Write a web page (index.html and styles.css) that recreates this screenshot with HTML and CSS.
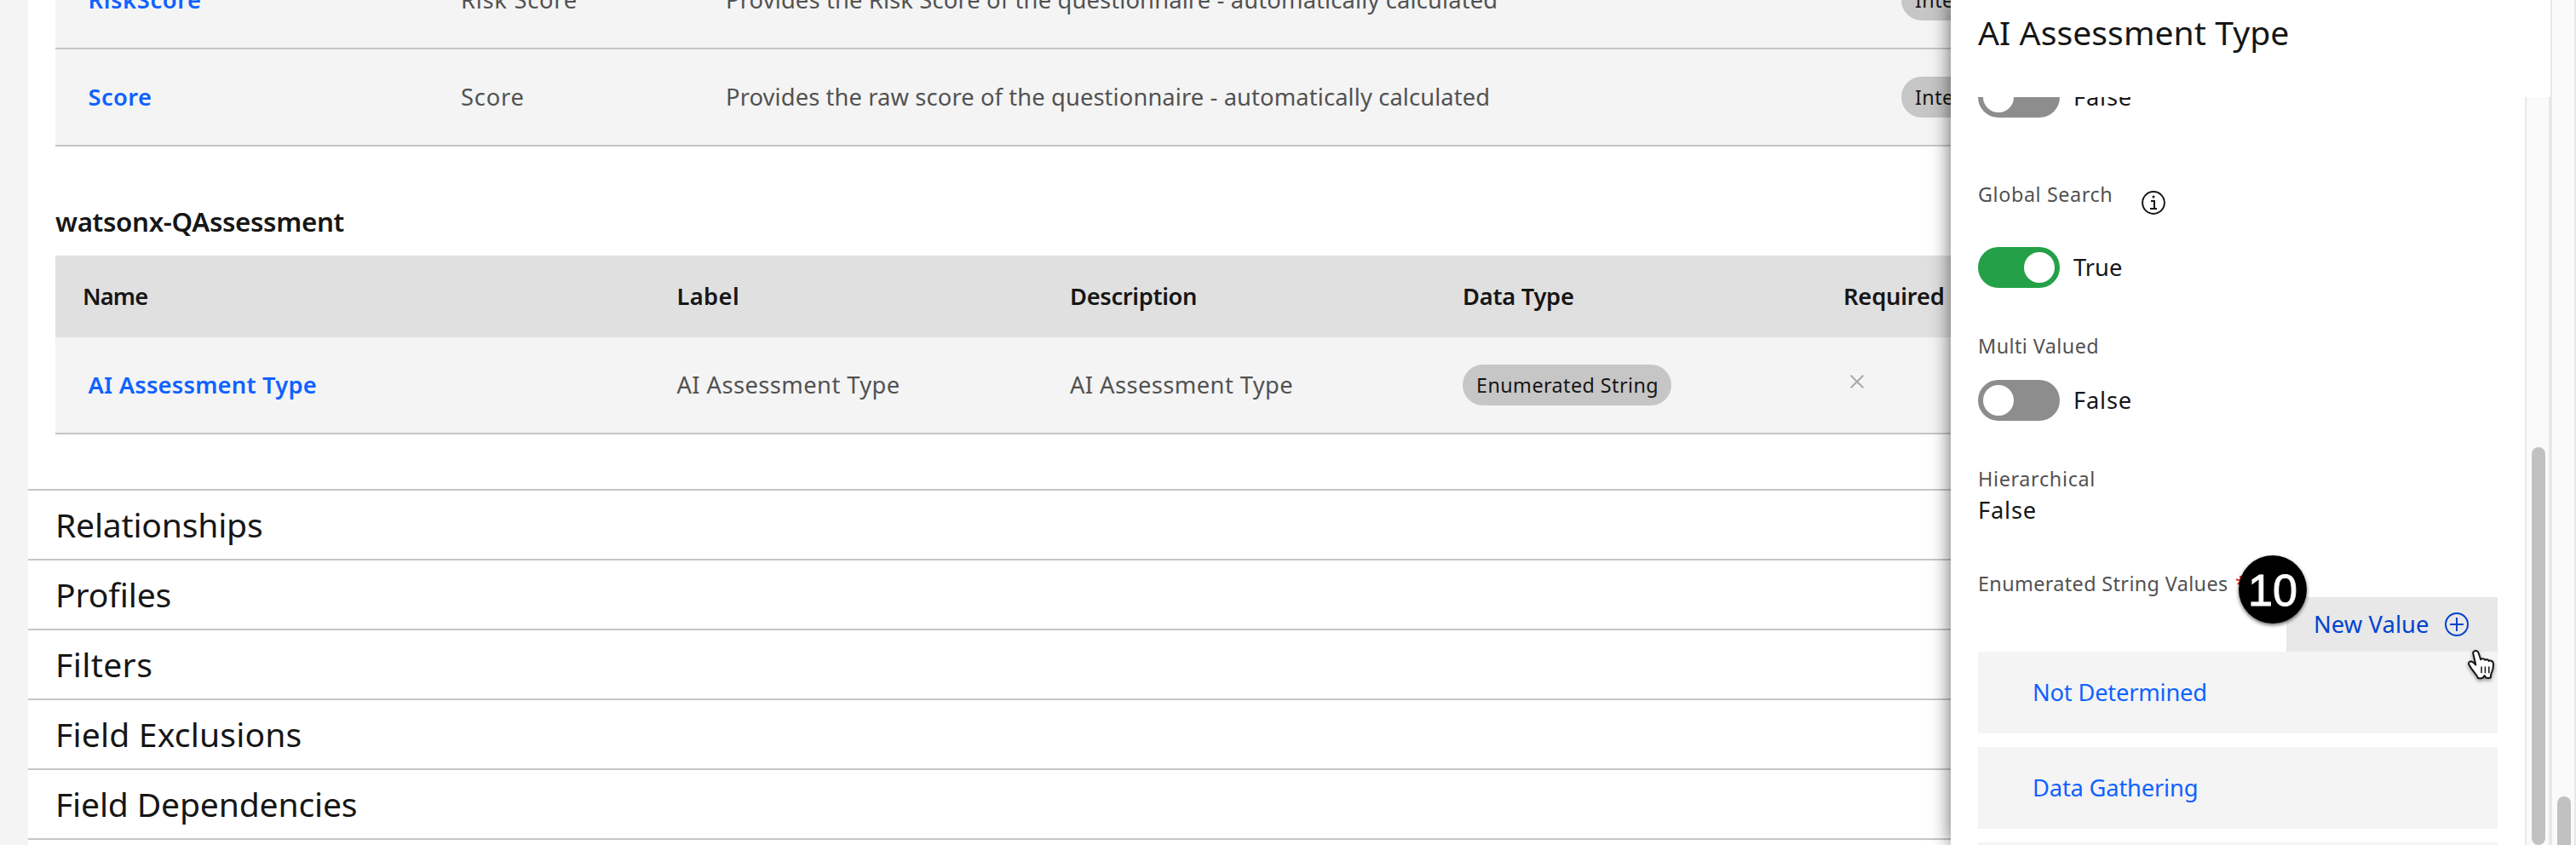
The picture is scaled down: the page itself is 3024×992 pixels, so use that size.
FILE: index.html
```
<!DOCTYPE html>
<html lang="en">
<head>
<meta charset="utf-8">
<title>AI Assessment Type</title>
<link rel="stylesheet" href="styles.css">
</head>
<body>
<div class="app">
  <main class="page">
    <section class="table table-scores">
      <div class="row">
        <a class="link ls-risk-b">RiskScore</a>
        <span class="ls-risk">Risk Score</span>
        <span class="ls-desc1">Provides the Risk Score of the questionnaire - automatically calculated</span>
        <span class="tag ls-int">Integer</span>
      </div>
      <div class="row">
        <a class="link ls-score-b">Score</a>
        <span class="ls-score">Score</span>
        <span class="ls-desc2">Provides the raw score of the questionnaire - automatically calculated</span>
        <span class="tag ls-int">Integer</span>
      </div>
    </section>

    <h2 class="group-title">watsonx-QAssessment</h2>
    <section class="table table-fields">
      <div class="head">
        <span class="ls-name">Name</span>
        <span class="ls-label">Label</span>
        <span class="ls-description">Description</span>
        <span class="ls-datatype">Data Type</span>
        <span class="ls-required">Required</span>
      </div>
      <div class="row">
        <a class="link ls-ai-b">AI Assessment Type</a>
        <span class="ls-ai">AI Assessment Type</span>
        <span class="ls-ai">AI Assessment Type</span>
        <span class="tag ls-enum">Enumerated String</span>
        <svg class="cross" viewBox="0 0 16 16"><path d="M.7.7l14.6 14.6M15.3.7L.7 15.3"/></svg>
      </div>
    </section>

    <section class="accordion">
      <h3 class="ls-rel">Relationships</h3>
      <h3 class="ls-pro">Profiles</h3>
      <h3 class="ls-fil">Filters</h3>
      <h3 class="ls-exc">Field Exclusions</h3>
      <h3 class="ls-dep">Field Dependencies</h3>
      <h3></h3>
    </section>
  </main>

  <aside class="panel">
    <h1 class="panel-title">AI Assessment Type</h1>
    <div class="panel-body">
      <div class="fields">
        <div class="toggle-row first">
          <span class="toggle"><i class="knob"></i></span><span class="ls-false">False</span>
        </div>

        <div class="label-row global">
          <span class="label ls-global">Global Search</span>
          <svg class="info" viewBox="0 0 28 28">
            <circle cx="14" cy="14" r="12.9" fill="none" stroke="#161616" stroke-width="2"/>
            <circle cx="14" cy="6.9" r="1.5" fill="#161616"/>
            <path d="M11 12h4v8M10 20.9h8" fill="none" stroke="#161616" stroke-width="2"/>
          </svg>
        </div>
        <div class="toggle-row">
          <span class="toggle on"><i class="knob"></i></span><span class="ls-true">True</span>
        </div>

        <div class="label multi ls-multi">Multi Valued</div>
        <div class="toggle-row">
          <span class="toggle"><i class="knob"></i></span><span class="ls-false">False</span>
        </div>

        <div class="label hier ls-hier">Hierarchical</div>
        <div class="value ls-false">False</div>

        <div class="label enum ls-values">Enumerated String Values <span class="required">*</span></div>
        <div class="actions">
          <button class="new-value">
            <span class="ls-new">New Value</span>
            <svg class="plus" viewBox="0 0 28 28"><circle cx="14" cy="14" r="13"/><path d="M14 6v16M6 14h16"/></svg>
          </button>
        </div>
        <div class="values">
          <a class="item ls-not">Not Determined</a>
          <a class="item ls-data">Data Gathering</a>
          <a class="item"></a>
        </div>
      </div>
      <div class="scroll inner"><i class="thumb"></i></div>
    </div>
  </aside>
  <div class="scroll outer"><i class="thumb"></i></div>

  <div class="badge">10</div>
  <svg class="cursor" viewBox="0 0 34 38">
    <path d="M9.2 2.2c1.900-.8 3.800.3 4.400 2.300l2.500 7.700c1.600-1.300 3.900-1.100 5 .6 1.600-1 3.700-.6 4.700 1.100 2.200-1 4.900.3 5.100 2.900.4 5.200-.4 8.200-2.600 12.300l-.5 4.400c-1.900.5-3.700.5-5.600.1l-1.600-2.500-2.300 2.800c-1.800.4-3.600.4-5.400 0-.6-2.300-2.400-4.100-4.500-6.700-2.300-2.900-4.300-5.900-6-9-1.100-2.100.5-3.900 2.700-3.600 2.100.3 3.500 2 5.200 3.900L7.300 5.600c-.5-1.500.4-2.900 1.900-3.400z" fill="#fff" stroke="#161616" stroke-width="2" stroke-linejoin="round"/>
    <path d="M17 20.500v7.700M21.400 20.500v7.700M25.800 20.500v7.700" fill="none" stroke="#161616" stroke-width="1.500"/>
  </svg>
</div>
</body>
</html>
```
FILE: styles.css
```
* { box-sizing: border-box; }
body { margin: 0; }

.app {
  position: relative;
  width: 3024px;
  height: 992px;
  overflow: hidden;
  padding-left: 33px;
  background: #f4f4f4;
  color: #161616;
  font: 27.3px/36px "Noto Sans", sans-serif;
}
.page { height: 992px; overflow: hidden; background: #fff; }

/* Tables */
.table { margin-left: 32px; }
.table-scores { margin-top: -56px; }
.row, .head { display: grid; align-items: center; white-space: nowrap; }
.table-scores .row { grid-template-columns: 476px 311px 1380px auto; }
.table-fields .row, .table-fields .head { grid-template-columns: 729.5px 461.5px 461px 447px auto; }
.row {
  height: 114px;
  padding-bottom: 1px;
  background: #f4f4f4;
  border-bottom: 2px solid #c6c6c6;
  color: #525252;
}
.head { height: 96px; padding-bottom: 1px; background: #e0e0e0; font-weight: 600; }
.head span:first-child { padding-left: 32px; }
.link { padding-left: 38.5px; color: #0f62fe; font-weight: 600; }
.tag {
  justify-self: start;
  height: 48px;
  margin-top: 1px;
  padding: 0 15px 0 16px;
  border-radius: 24px;
  background: #c6c6c6;
  color: #161616;
  font-size: 23.4px;
  line-height: 49px;
}
.cross { width: 16px; height: 16px; margin: -7px 0 0 8px; fill: none; stroke: #a8a8a8; stroke-width: 2; }
.group-title { margin: 0; padding: 64px 0 16px 32px; font-size: 31.3px; font-weight: 600; line-height: 48px; letter-spacing: -.34px; }

/* Accordion */
.accordion { margin-top: 64px; }
.accordion h3 {
  height: 82px;
  margin: 0;
  padding-left: 32px;
  border-top: 2px solid #c6c6c6;
  font-size: 39.1px;
  font-weight: 400;
  line-height: 80px;
}

/* Side panel */
.panel {
  position: absolute;
  top: 0;
  left: 2290px;
  width: 704px;
  height: 992px;
  display: flex;
  flex-direction: column;
  background: #fff;
  box-shadow: 0 0 22px rgba(0, 0, 0, .6);
}
.panel-title { height: 114px; margin: 0; padding: 8px 0 0 32px; font-size: 39.1px; font-weight: 400; line-height: 60px; letter-spacing: .07px; }
.panel-body { display: flex; height: 878px; overflow: hidden; }
.fields { width: 674px; padding: 0 32px; }
.toggle-row { display: flex; gap: 16px; height: 48px; line-height: 47px; }
.toggle-row.first { margin-top: -24px; }
.toggle { display: flex; width: 96px; height: 48px; padding: 6px; border-radius: 24px; background: #8d8d8d; }
.toggle.on { justify-content: flex-end; background: #24a148; }
.knob { width: 36px; height: 36px; border-radius: 50%; background: #fff; }
.label { height: 32px; color: #525252; font-size: 23.4px; line-height: 32px; white-space: nowrap; }
.label-row { display: flex; align-items: flex-start; height: 32px; }
.global { margin: 74px 0 46px; }
.label-row .label { width: 192px; }
.info { width: 28px; height: 28px; margin-top: 12px; }
.multi { margin: 52px 0 24px; }
.hier { margin: 52px 0 3px; }
.enum { margin-top: 52px; }
.required { padding-left: 2px; color: #da1e28; }
.actions { display: flex; justify-content: flex-end; }
.new-value {
  display: flex;
  align-items: center;
  justify-content: space-between;
  width: 248px;
  height: 64px;
  padding: 0 34px 0 32px;
  border: 0;
  background: #e8e8e8;
  color: #0043ce;
  font: inherit;
  line-height: 64px;
}
.plus { width: 28px; height: 28px; fill: none; stroke: #0043ce; stroke-width: 2; }
.values { display: flex; flex-direction: column; gap: 16px; }
.item { height: 96px; padding-left: 64px; background: #f4f4f4; color: #0f62fe; line-height: 96px; }

/* Scrollbars */
.scroll { width: 30px; padding-left: 6px; background: #fafafa; border: 2px solid #e8e8e8; border-width: 0 2px; overflow: hidden; }
.inner { padding-top: 411px; height: 878px; }
.outer { position: absolute; top: 0; right: 0; height: 992px; padding-top: 935px; }
.thumb { display: block; width: 16px; height: 467px; border-radius: 8px; background: #c1c1c1; }

/* Callout and pointer */
.badge {
  position: absolute;
  left: 2628px;
  top: 652px;
  width: 80px;
  height: 80px;
  border-radius: 50%;
  background: #000;
  box-shadow: 0 2px 4px rgba(0, 0, 0, .6);
  color: #fff;
  font: 52px/82px "Liberation Sans", sans-serif;
  text-align: center;
  -webkit-text-stroke: 1px #fff;
}
.cursor { position: absolute; left: 2896px; top: 762px; width: 34px; height: 38px; filter: drop-shadow(0 2px 2px rgba(0, 0, 0, .4)); }

/* Tracking per text */
.ls-risk-b { letter-spacing: .62px; }
.ls-risk { letter-spacing: .73px; }
.ls-score-b { letter-spacing: .39px; }
.ls-score { letter-spacing: .79px; }
.ls-desc1 { letter-spacing: .16px; }
.ls-desc2 { letter-spacing: .12px; }
.ls-int { letter-spacing: .4px; }
.ls-name { letter-spacing: -.87px; }
.ls-label { letter-spacing: .37px; }
.ls-description { letter-spacing: -.34px; }
.ls-datatype { letter-spacing: -.28px; }
.ls-required { letter-spacing: -.18px; }
.ls-ai-b { letter-spacing: .22px; }
.ls-ai { letter-spacing: .43px; }
.ls-enum { letter-spacing: .4px; }
.ls-rel { letter-spacing: -.2px; }
.ls-pro { letter-spacing: -.1px; }
.ls-fil { letter-spacing: .4px; }
.ls-exc { letter-spacing: .18px; }
.ls-dep { letter-spacing: -.16px; }
.ls-false { letter-spacing: .8px; }
.ls-true { letter-spacing: .01px; }
.ls-global { letter-spacing: .58px; }
.ls-multi { letter-spacing: .42px; }
.ls-hier { letter-spacing: .65px; }
.ls-values { letter-spacing: .36px; }
.ls-new { letter-spacing: .1px; }
.ls-not { letter-spacing: -.2px; }
.ls-data { letter-spacing: -.18px; }
```
